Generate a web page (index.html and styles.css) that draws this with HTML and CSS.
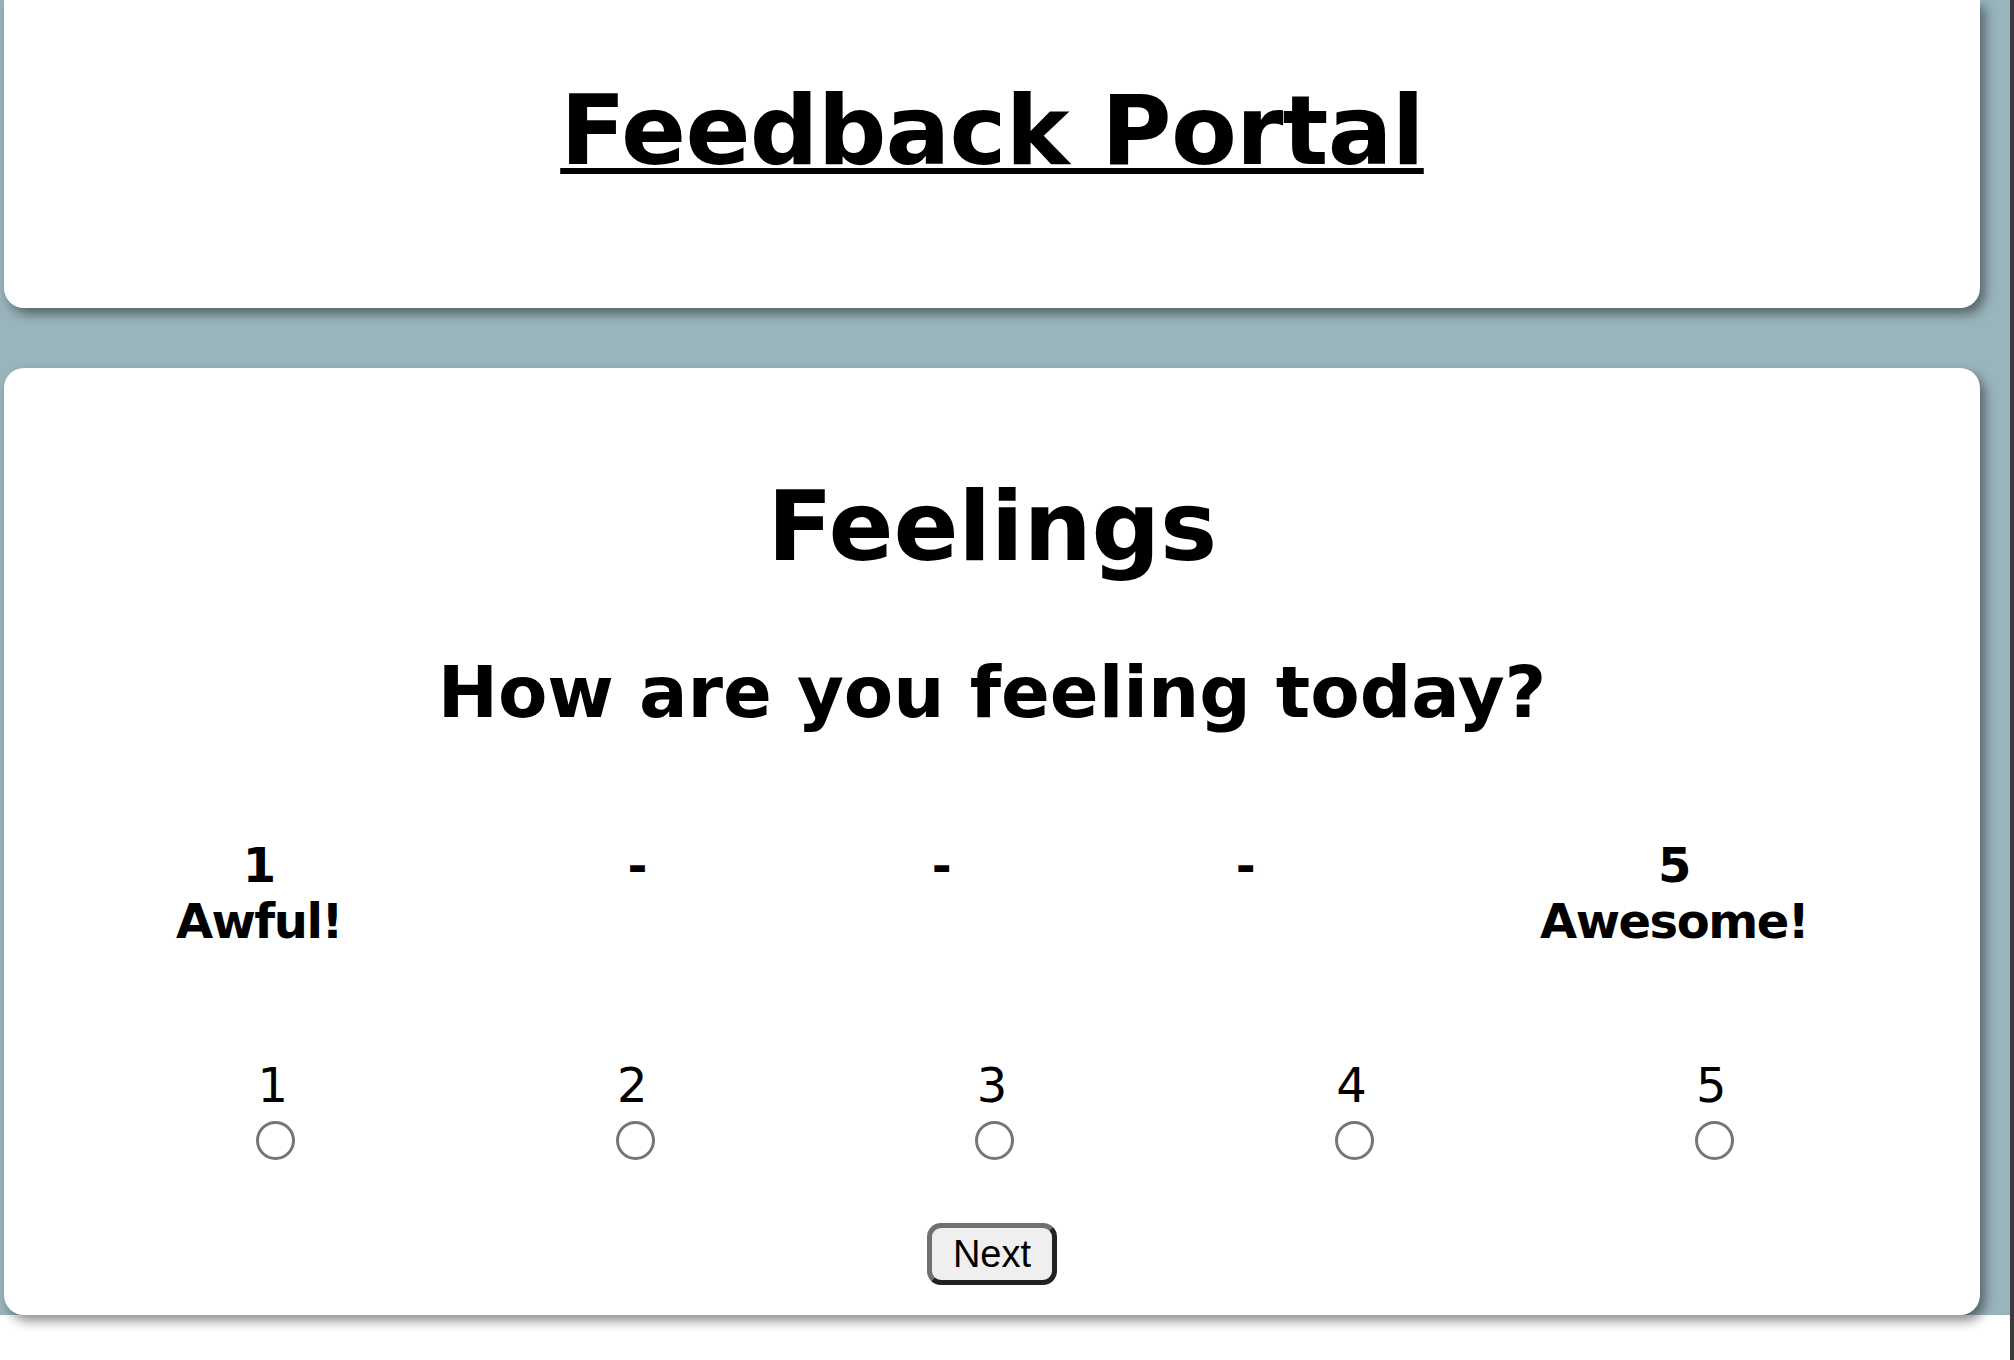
FILE: index.html
```html
<!DOCTYPE html>
<html lang="en">
<head>
<meta charset="utf-8">
<title>Feedback Portal</title>
<link rel="stylesheet" href="styles.css">
</head>
<body>
<div class="page">
  <header class="card card--header">
    <h1 class="portal-title">Feedback Portal</h1>
  </header>
  <main class="card card--question">
    <h1 class="section-title">Feelings</h1>
    <h2 class="question">How are you feeling today?</h2>
    <div class="scale">
      <div class="scale-item">1<br>Awful!</div>
      <div class="scale-item">-</div>
      <div class="scale-item">-</div>
      <div class="scale-item">-</div>
      <div class="scale-item">5<br>Awesome!</div>
    </div>
    <div class="choices">
      <label class="choice"><span class="choice-num">1</span><input type="radio" name="feeling" value="1"></label>
      <label class="choice"><span class="choice-num">2</span><input type="radio" name="feeling" value="2"></label>
      <label class="choice"><span class="choice-num">3</span><input type="radio" name="feeling" value="3"></label>
      <label class="choice"><span class="choice-num">4</span><input type="radio" name="feeling" value="4"></label>
      <label class="choice"><span class="choice-num">5</span><input type="radio" name="feeling" value="5"></label>
    </div>
    <div class="actions">
      <button class="next" type="button">Next</button>
    </div>
  </main>
</div>
</body>
</html>
```

FILE: styles.css
```css
html {
  background: #ffffff;
}

body {
  margin: 0;
  min-height: 100vh;
  box-sizing: border-box;
  border-right: 4px solid #3b3b3d;
  background: #ffffff;
  color: #000000;
  font-family: "DejaVu Sans", Verdana, sans-serif;
}

.page {
  background: #99b5bc;
  padding: 0 30px 0 4px;
  display: flex;
  flex-direction: column;
  gap: 60px;
}

.card {
  background: #ffffff;
  border-radius: 20px;
  box-shadow: 5px 6px 12px rgba(0, 0, 0, 0.45);
}

.card--header {
  border-radius: 0 0 20px 20px;
  padding: 75px 29px 121px;
  text-align: center;
}

.portal-title {
  margin: 0;
  font-size: 96px;
  font-weight: bold;
  line-height: normal;
  letter-spacing: -0.8px;
  text-decoration: underline;
  text-decoration-thickness: 6px;
  text-underline-offset: 4px;
}

.card--question {
  padding: 103px 29px 30px;
}

.section-title {
  margin: 0;
  font-size: 96px;
  font-weight: bold;
  line-height: normal;
  letter-spacing: -0.3px;
  text-align: center;
}

.question {
  margin: 67px 0 0;
  font-size: 72px;
  font-weight: bold;
  line-height: normal;
  text-align: center;
}

.scale {
  display: flex;
  margin-top: 103px;
  font-size: 48px;
  font-weight: bold;
  line-height: normal;
  letter-spacing: -1.5px;
  text-align: center;
}

.scale-item {
  flex: 1 1 auto;
}

.choices {
  display: flex;
  margin-top: 108px;
  padding: 0 60px;
  font-size: 48px;
  line-height: normal;
}

.choice {
  flex: 1 1 0;
  display: flex;
  flex-direction: column;
  align-items: center;
}

.choice input {
  appearance: none;
  -webkit-appearance: none;
  width: 39px;
  height: 39px;
  margin: 8px 9px 0 15px;
  border: 3px solid #767676;
  border-radius: 50%;
  box-sizing: border-box;
  background: #ffffff;
}

.actions {
  display: flex;
  justify-content: center;
  margin-top: 63px;
}

.next {
  font-family: "Liberation Sans", Arial, sans-serif;
  font-size: 38px;
  line-height: 44px;
  padding: 4px 21px;
  color: #000000;
  background: #efefef;
  border: 5px solid;
  border-color: #707070 #222222 #222222 #707070;
  border-radius: 14px;
}
```
